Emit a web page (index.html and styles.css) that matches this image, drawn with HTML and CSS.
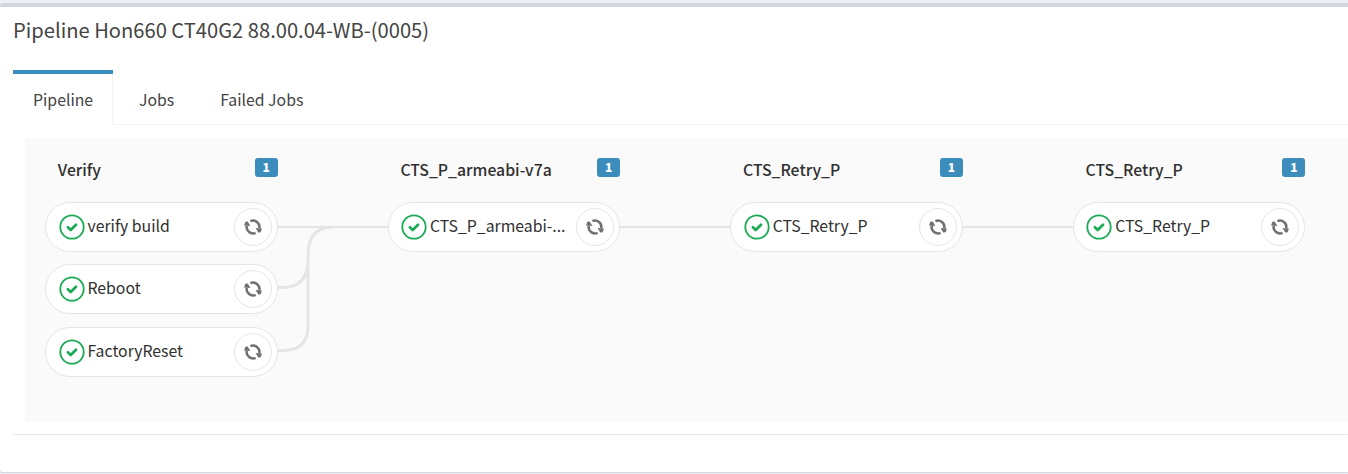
FILE: index.html
```html
<!DOCTYPE html>
<html lang="en">
<head>
<meta charset="utf-8">
<title>Pipeline</title>
<link rel="stylesheet" href="styles.css">
</head>
<body>
<svg width="0" height="0" class="defs" aria-hidden="true">
  <symbol id="ok" viewBox="0 0 26 26">
    <circle cx="13" cy="13" r="11.7" fill="none" stroke="#1aaa55" stroke-width="1.8"/>
    <path d="M8.9 13.3l2.8 2.7 5.3-5.2" fill="none" stroke="#1aaa55" stroke-width="2.7" stroke-linecap="round" stroke-linejoin="round"/>
  </symbol>
  <symbol id="retry" viewBox="0 0 18 18">
    <g fill="none" stroke="#707070" stroke-width="2.5">
      <path d="M6.4 3.2A6.4 6.4 0 0 1 15.3 10.2"/>
      <path d="M11.6 14.8A6.4 6.4 0 0 1 2.7 7.8"/>
    </g>
    <path d="M11.6 10l6.3 .6-1.2 3.6-2.4 .3zM6.4 8L.1 7.4 1.3 3.8 3.7 3.5z" fill="#707070"/>
  </symbol>
</svg>
<main class="box">
  <h1 class="title">Pipeline Hon660 CT40G2 88.00.04-WB-(0005)</h1>
  <section class="tabs-box">
    <nav class="tabs">
      <a class="tab active">Pipeline</a>
      <a class="tab">Jobs</a>
      <a class="tab">Failed Jobs</a>
    </nav>
    <div class="graph">
      <div class="stage">
        <div class="stage-head"><span class="stage-name">Verify</span><span class="badge">1</span></div>
        <div class="jobs">
          <div class="job linked"><svg class="ok"><use href="#ok"/></svg><span class="name">verify build</span><span class="retry"><svg><use href="#retry"/></svg></span></div>
          <div class="job"><svg class="ok"><use href="#ok"/></svg><span class="name">Reboot</span><span class="retry"><svg><use href="#retry"/></svg></span></div>
          <div class="job"><svg class="ok"><use href="#ok"/></svg><span class="name">FactoryReset</span><span class="retry"><svg><use href="#retry"/></svg></span></div>
          <svg class="curves" viewBox="0 0 60 152"><path d="M0 85.5H5Q30 85.5 30 57M0 148.5H5Q30 148.5 30 124V53Q30 25 55 25"/></svg>
        </div>
      </div>
      <div class="stage">
        <div class="stage-head"><span class="stage-name">CTS_P_armeabi-v7a</span><span class="badge">1</span></div>
        <div class="jobs"><div class="job linked"><svg class="ok"><use href="#ok"/></svg><span class="name">CTS_P_armeabi-...</span><span class="retry"><svg><use href="#retry"/></svg></span></div></div>
      </div>
      <div class="stage">
        <div class="stage-head"><span class="stage-name">CTS_Retry_P</span><span class="badge">1</span></div>
        <div class="jobs"><div class="job linked"><svg class="ok"><use href="#ok"/></svg><span class="name">CTS_Retry_P</span><span class="retry"><svg><use href="#retry"/></svg></span></div></div>
      </div>
      <div class="stage">
        <div class="stage-head"><span class="stage-name">CTS_Retry_P</span><span class="badge">1</span></div>
        <div class="jobs"><div class="job"><svg class="ok"><use href="#ok"/></svg><span class="name">CTS_Retry_P</span><span class="retry"><svg><use href="#retry"/></svg></span></div></div>
      </div>
    </div>
  </section>
</main>
</body>
</html>
```
FILE: styles.css
```css
* { box-sizing: border-box; }
body {
  margin: 0;
  padding-top: 3px;
  height: 474px;
  overflow: hidden;
  background: #ecf0f5;
  color: #444;
  font-family: "Noto Sans CJK SC", "Noto Sans", sans-serif;
  font-size: 15.8px;
}
.defs { position: absolute; }
.box {
  height: 469px;
  padding-left: 13px;
  background: #fff;
  border-top: 4px solid #d2d6de;
  border-radius: 3px 0 0 3px;
  box-shadow: 0 1px 1px rgba(0, 0, 0, .1);
}
.title {
  display: flex;
  align-items: center;
  height: 45px;
  margin: 0 0 18px;
  font-size: 20.15px;
  font-weight: 400;
}
.tabs-box {
  height: 364px;
  border-radius: 3px 0 0 3px;
  box-shadow: 0 1px 1px rgba(0, 0, 0, .1);
}
.tabs {
  display: flex;
  height: 55px;
  gap: 6px;
  border-bottom: 1px solid #f4f4f4;
}
.tab {
  height: 55px;
  padding: 0 20px;
  border-top: 4px solid transparent;
  line-height: 52px;
  white-space: nowrap;
}
.tab.active {
  width: 100px;
  border-top-color: #3c8dbc;
  background: linear-gradient(#f4f4f4, #f4f4f4) right / 1px 100% no-repeat #fff;
}
.graph {
  display: flex;
  gap: 110px;
  height: 284px;
  margin: 13px 0 0 12px;
  padding: 20px 0 0 20px;
  background: #fafafa;
  color: #303030;
}
.stage { flex: 0 0 232.6px; }
.stage-head {
  display: flex;
  justify-content: space-between;
  height: 44px;
  padding-left: 12.8px;
}
.stage-name { font-weight: 500; line-height: 24px; }
.badge {
  width: 23px;
  height: 19px;
  border-radius: 3px;
  background: #3c8dbc;
  color: #fff;
  font-size: 12px;
  font-weight: 900;
  line-height: 18px;
  text-align: center;
}
.jobs {
  position: relative;
  display: flex;
  flex-direction: column;
  gap: 12.4px;
}
.job {
  position: relative;
  display: flex;
  align-items: center;
  height: 50px;
  padding: 0 5px 0 12.5px;
  border: 1px solid #e5e5e5;
  border-radius: 25px;
  background: #fff;
}
.linked::after {
  content: "";
  position: absolute;
  left: 100%;
  top: 23px;
  width: 111px;
  height: 2px;
  background: #e5e5e5;
}
.ok { flex: none; width: 26px; height: 26px; margin-right: 3px; }
.name { flex: 1; padding-bottom: 2.3px; line-height: 24px; white-space: nowrap; }
.retry {
  display: flex;
  align-items: center;
  justify-content: center;
  width: 38px;
  height: 38px;
  border: 1px solid #e5e5e5;
  border-radius: 50%;
}
.retry svg { width: 18px; height: 18px; }
.curves {
  position: absolute;
  left: 100%;
  top: 0;
  width: 60px;
  height: 152px;
  fill: none;
  stroke: #e5e5e5;
  stroke-width: 3;
}
```
